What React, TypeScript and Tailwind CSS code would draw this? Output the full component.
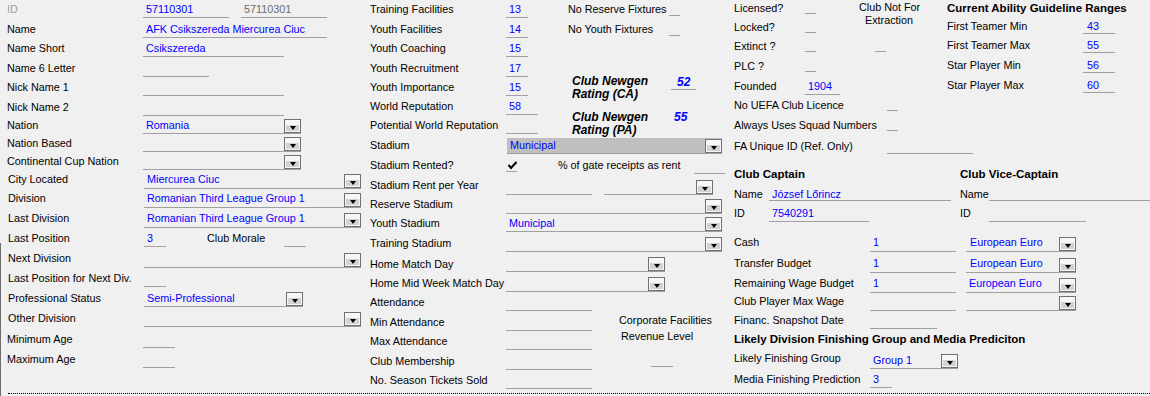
import React from "react";

type Kids = { children?: React.ReactNode };

function DropBtn() {
  return (
    <div className="w-[17px] h-[14px] shrink-0 self-end border border-[#707070] bg-[#f7f7f7] flex flex-col justify-end p-[1px]">
      <div className="h-[6px] bg-[#d2d2d2] flex items-center justify-center">
        <div className="w-[1px] h-0 border-x-[3px] border-x-transparent border-t-[4px] border-t-black" />
      </div>
    </div>
  );
}

function Field({
  w,
  h = "h-[16px]",
  v,
  drop,
  bg = "",
  color = "text-[#0000ff]",
  pl = "pl-[3px]",
  className = "",
}: {
  w: string;
  h?: string;
  v?: React.ReactNode;
  drop?: boolean;
  bg?: string;
  color?: string;
  pl?: string;
  className?: string;
}) {
  return (
    <div className={`${w} ${h} ${bg} ${className} shrink-0 flex items-start border-b border-[#a0a0a0]`}>
      <span className={`flex-1 min-w-0 ${pl} ${color} whitespace-nowrap leading-[14px] overflow-hidden`}>{v}</span>
      {drop && <DropBtn />}
    </div>
  );
}

function Check({ h = "h-[13px]", className = "", children }: { h?: string; className?: string } & Kids) {
  return <div className={`w-[11px] ${h} ${className} shrink-0 border-b border-[#a0a0a0]`}>{children}</div>;
}

function Row({ h, className = "", children }: { h: string; className?: string } & Kids) {
  return <div className={`flex items-start shrink-0 ${h} ${className}`}>{children}</div>;
}

function L({ w, className = "", children }: { w: string; className?: string } & Kids) {
  return <span className={`${w} ${className} shrink-0 whitespace-nowrap leading-[14px]`}>{children}</span>;
}

function Tick() {
  return (
    <svg width="11" height="9" viewBox="0 0 11 9" className="ml-[1px] mt-[3px]">
      <polyline points="1.5,4 4,7 9.5,1" fill="none" stroke="black" strokeWidth="2" />
    </svg>
  );
}

export default function App() {
  return (
    <div className="w-[1150px] h-[396px] bg-[#f0f0f0] text-black text-[10.8px] font-['Liberation_Sans',Arial,sans-serif] overflow-hidden relative flex flex-col">
      <div className="absolute left-0 top-[243px] bottom-0 w-px bg-[#6d6d6d]" />

      <div className="flex h-[393px] shrink-0">
        {/* general */}
        <div className="w-[370px] shrink-0 pl-[7px] pt-[2px] flex flex-col">
          <Row h="h-[20px]">
            <L w="w-[136px]" className="text-[#a0a0a0]">ID</L>
            <Field w="w-[86px]" v="57110301" />
            <Field w="w-[86px]" v="57110301" color="text-[#6d6d6d]" className="ml-[12px]" />
          </Row>
          <Row h="h-[19px]">
            <L w="w-[136px]">Name</L>
            <Field w="w-[184px]" v="AFK Csikszereda Miercurea Ciuc" />
          </Row>
          <Row h="h-[20px]">
            <L w="w-[136px]">Name Short</L>
            <Field w="w-[141px]" v="Csikszereda" />
          </Row>
          <Row h="h-[19px]">
            <L w="w-[136px]">Name 6 Letter</L>
            <Field w="w-[66px]" />
          </Row>
          <Row h="h-[20px]">
            <L w="w-[136px]">Nick Name 1</L>
            <Field w="w-[141px]" />
          </Row>
          <Row h="h-[18px]">
            <L w="w-[136px]">Nick Name 2</L>
            <Field w="w-[141px]" />
          </Row>
          <Row h="h-[18px]">
            <L w="w-[136px]">Nation</L>
            <Field w="w-[158px]" v="Romania" drop />
          </Row>
          <Row h="h-[18px]">
            <L w="w-[136px]">Nation Based</L>
            <Field w="w-[158px]" drop />
          </Row>
          <Row h="h-[18px]">
            <L w="w-[136px]">Continental Cup Nation</L>
            <Field w="w-[158px]" drop />
          </Row>
          <Row h="h-[19px]">
            <L w="w-[136px]" className="pl-[1px]">City Located</L>
            <Field w="w-[217px]" h="h-[17px]" v="Miercurea Ciuc" drop className="ml-[1px]" />
          </Row>
          <Row h="h-[20px]">
            <L w="w-[136px]" className="pl-[1px]">Division</L>
            <Field w="w-[217px]" h="h-[17px]" v="Romanian Third League Group 1" drop className="ml-[1px]" />
          </Row>
          <Row h="h-[20px]">
            <L w="w-[136px]" className="pl-[1px]">Last Division</L>
            <Field w="w-[217px]" h="h-[17px]" v="Romanian Third League Group 1" drop className="ml-[1px]" />
          </Row>
          <Row h="h-[20px]">
            <L w="w-[136px]" className="pl-[1px]">Last Position</L>
            <Field w="w-[22px]" v="3" className="ml-[1px]" />
            <L w="w-[77px]" className="ml-[41px]">Club Morale</L>
            <Field w="w-[22px]" />
          </Row>
          <Row h="h-[20px]">
            <L w="w-[136px]" className="pl-[1px]">Next Division</L>
            <Field w="w-[217px]" h="h-[17px]" drop className="ml-[1px]" />
          </Row>
          <Row h="h-[20px]">
            <L w="w-[136px]" className="pl-[1px]">Last Position for Next Div.</L>
            <Field w="w-[22px]" className="ml-[1px]" />
          </Row>
          <Row h="h-[20px]">
            <L w="w-[136px]" className="pl-[1px]">Professional Status</L>
            <Field w="w-[159px]" v="Semi-Professional" drop className="ml-[1px]" />
          </Row>
          <Row h="h-[21px]">
            <L w="w-[136px]" className="pl-[1px]">Other Division</L>
            <Field w="w-[217px]" drop className="ml-[1px]" />
          </Row>
          <Row h="h-[20px]">
            <L w="w-[136px]">Minimum Age</L>
            <Field w="w-[32px]" />
          </Row>
          <Row h="h-[20px]">
            <L w="w-[136px]">Maximum Age</L>
            <Field w="w-[32px]" />
          </Row>
        </div>

        {/* facilities / stadium */}
        <div className="w-[364px] shrink-0 pt-[2px] flex flex-col">
          <div className="flex h-[136px] shrink-0">
            <div className="w-[198px] shrink-0 flex flex-col">
              <Row h="h-[20px]">
                <L w="w-[136px]">Training Facilities</L>
                <Field w="w-[22px]" v="13" />
              </Row>
              <Row h="h-[19px]">
                <L w="w-[136px]">Youth Facilities</L>
                <Field w="w-[22px]" v="14" />
              </Row>
              <Row h="h-[20px]">
                <L w="w-[136px]">Youth Coaching</L>
                <Field w="w-[22px]" v="15" />
              </Row>
              <Row h="h-[19px]">
                <L w="w-[136px]">Youth Recruitment</L>
                <Field w="w-[22px]" v="17" />
              </Row>
              <Row h="h-[19px]">
                <L w="w-[136px]">Youth Importance</L>
                <Field w="w-[22px]" v="15" />
              </Row>
              <Row h="h-[19px]">
                <L w="w-[136px]">World Reputation</L>
                <Field w="w-[32px]" v="58" />
              </Row>
              <Row h="h-[20px]">
                <L w="w-[136px]">Potential World Reputation</L>
                <Field w="w-[32px]" />
              </Row>
            </div>
            <div className="flex-1 flex flex-col">
              <Row h="h-[20px]">
                <L w="w-[101px]">No Reserve Fixtures</L>
                <Check h="h-[14px]" />
              </Row>
              <Row h="h-[20px]">
                <L w="w-[101px]">No Youth Fixtures</L>
                <Check h="h-[14px]" />
              </Row>
              <div className="flex mt-[33px]">
                <div className="w-[103px] pl-[4px] text-[12px] font-bold italic leading-[13px]">
                  Club Newgen
                  <br />
                  Rating (CA)
                </div>
                <Field w="w-[25px]" h="h-[15px]" pl="pl-[6px]" v={<span className="text-[12px] font-bold italic leading-[13px]">52</span>} />
              </div>
              <div className="flex mt-[10px]">
                <div className="w-[103px] pl-[4px] text-[12px] font-bold italic leading-[13px]">
                  Club Newgen
                  <br />
                  Rating (PA)
                </div>
                <span className="pl-[3px] text-[#0000ff] text-[12px] font-bold italic leading-[13px]">55</span>
              </div>
            </div>
          </div>

          <Row h="h-[20px]">
            <L w="w-[136px]">Stadium</L>
            <Field w="w-[215px]" v="Municipal" bg="bg-[#bfbfbf]" drop className="ml-[1px]" />
          </Row>
          <Row h="h-[20px]">
            <L w="w-[136px]">Stadium Rented?</L>
            <Check h="h-[14px]">
              <Tick />
            </Check>
            <L w="w-[136px]" className="ml-[41px]">% of gate receipts as rent</L>
            <Field w="w-[31px]" />
          </Row>
          <Row h="h-[19px]">
            <L w="w-[136px]">Stadium Rent per Year</L>
            <Field w="w-[86px]" h="h-[17px]" />
            <Field w="w-[109px]" h="h-[17px]" drop className="ml-[12px]" />
          </Row>
          <Row h="h-[19px]">
            <L w="w-[136px]">Reserve Stadium</L>
            <Field w="w-[216px]" h="h-[17px]" drop />
          </Row>
          <Row h="h-[20px]">
            <L w="w-[136px]">Youth Stadium</L>
            <Field w="w-[216px]" v="Municipal" drop />
          </Row>
          <Row h="h-[21px]">
            <L w="w-[136px]">Training Stadium</L>
            <Field w="w-[216px]" drop />
          </Row>
          <Row h="h-[19px]">
            <L w="w-[136px]">Home Match Day</L>
            <Field w="w-[159px]" h="h-[15px]" drop />
          </Row>
          <Row h="h-[19px]">
            <L w="w-[136px]">Home Mid Week Match Day</L>
            <Field w="w-[159px]" drop />
          </Row>
          <div className="flex">
            <div className="w-[249px] shrink-0 flex flex-col">
              <Row h="h-[20px]">
                <L w="w-[136px]">Attendance</L>
                <Field w="w-[86px]" />
              </Row>
              <Row h="h-[19px]">
                <L w="w-[136px]">Min Attendance</L>
                <Field w="w-[86px]" />
              </Row>
              <Row h="h-[20px]">
                <L w="w-[136px]">Max Attendance</L>
                <Field w="w-[86px]" />
              </Row>
              <Row h="h-[19px]">
                <L w="w-[136px]">Club Membership</L>
                <Field w="w-[86px]" />
              </Row>
              <Row h="h-[20px]">
                <L w="w-[136px]">No. Season Tickets Sold</L>
                <Field w="w-[86px]" />
              </Row>
            </div>
            <div className="flex flex-col pt-[17px]">
              <span className="leading-[16px] whitespace-nowrap">Corporate Facilities</span>
              <span className="leading-[16px] pl-[2px] whitespace-nowrap">Revenue Level</span>
              <Field w="w-[22px]" className="ml-[32px] mt-[7px]" />
            </div>
          </div>
        </div>

        {/* club / finances */}
        <div className="flex-1 pt-[1px] flex flex-col">
          <div className="flex h-[166px] shrink-0">
            <div className="w-[213px] shrink-0 flex flex-col">
              <div className="flex h-[78px] shrink-0">
                <div className="w-[125px] shrink-0 flex flex-col">
                  <Row h="h-[19px]">
                    <L w="w-[71px]">Licensed?</L>
                    <Check />
                  </Row>
                  <Row h="h-[19px]">
                    <L w="w-[71px]">Locked?</L>
                    <Check />
                  </Row>
                  <Row h="h-[20px]">
                    <L w="w-[71px]">Extinct ?</L>
                    <Check />
                  </Row>
                  <Row h="h-[20px]">
                    <L w="w-[71px]">PLC ?</L>
                    <Check />
                  </Row>
                </div>
                <div className="w-[60px] shrink-0 flex flex-col">
                  <div className="text-center leading-[13px] whitespace-nowrap">
                    Club Not For
                    <br />
                    Extraction
                  </div>
                  <Check className="mt-[12px] ml-[16px]" />
                </div>
              </div>
              <Row h="h-[19px]">
                <L w="w-[71px]">Founded</L>
                <Field w="w-[35px]" v="1904" />
              </Row>
              <Row h="h-[20px]">
                <L w="w-[153px]">No UEFA Club Licence</L>
                <Check />
              </Row>
              <Row h="h-[21px]">
                <L w="w-[153px]">Always Uses Squad Numbers</L>
                <Check />
              </Row>
              <Row h="h-[28px]">
                <L w="w-[153px]">FA Unique ID (Ref. Only)</L>
                <Field w="w-[86px]" h="h-[15px]" />
              </Row>
            </div>
            <div className="flex-1 flex flex-col">
              <Row h="h-[18px]">
                <L w="w-[200px]" className="font-bold text-[11.5px]">Current Ability Guideline Ranges</L>
              </Row>
              <Row h="h-[19px]">
                <L w="w-[136px]">First Teamer Min</L>
                <Field w="w-[32px]" h="h-[15px]" pl="pl-[4px]" v="43" />
              </Row>
              <Row h="h-[20px]">
                <L w="w-[136px]">First Teamer Max</L>
                <Field w="w-[32px]" h="h-[15px]" pl="pl-[4px]" v="55" />
              </Row>
              <Row h="h-[20px]">
                <L w="w-[136px]">Star Player Min</L>
                <Field w="w-[32px]" h="h-[15px]" pl="pl-[4px]" v="56" />
              </Row>
              <Row h="h-[20px]">
                <L w="w-[136px]">Star Player Max</L>
                <Field w="w-[32px]" h="h-[15px]" pl="pl-[4px]" v="60" />
              </Row>
            </div>
          </div>

          <Row h="h-[20px]">
            <L w="w-[226px]" className="font-bold text-[11.5px]">Club Captain</L>
            <L w="w-[160px]" className="font-bold text-[11.5px]">Club Vice-Captain</L>
          </Row>
          <Row h="h-[19px]">
            <L w="w-[35px]">Name</L>
            <Field w="w-[182px]" h="h-[14px]" v="József Lőrincz" />
            <L w="w-[29px]" className="ml-[9px]">Name</L>
            <Field w="w-[161px]" h="h-[14px]" />
          </Row>
          <Row h="h-[29px]">
            <L w="w-[35px]">ID</L>
            <Field w="w-[100px]" v="7540291" />
            <L w="w-[29px]" className="ml-[91px]">ID</L>
            <Field w="w-[97px]" />
          </Row>

          <Row h="h-[21px]">
            <L w="w-[136px]">Cash</L>
            <Field w="w-[86px]" h="h-[17px]" v="1" />
            <Field w="w-[110px]" h="h-[17px]" v="European Euro" pl="pl-[4px]" drop className="ml-[10px]" />
          </Row>
          <Row h="h-[20px]">
            <L w="w-[136px]">Transfer Budget</L>
            <Field w="w-[86px]" h="h-[17px]" v="1" />
            <Field w="w-[110px]" h="h-[17px]" v="European Euro" pl="pl-[4px]" drop className="ml-[10px]" />
          </Row>
          <Row h="h-[18px]">
            <L w="w-[136px]">Remaining Wage Budget</L>
            <Field w="w-[86px]" h="h-[17px]" v="1" />
            <Field w="w-[110px]" h="h-[17px]" v="European Euro" drop className="ml-[10px]" />
          </Row>
          <Row h="h-[19px]">
            <L w="w-[136px]">Club Player Max Wage</L>
            <Field w="w-[86px]" h="h-[17px]" />
            <Field w="w-[110px]" h="h-[17px]" drop className="ml-[10px]" />
          </Row>
          <Row h="h-[19px]">
            <L w="w-[136px]">Financ. Snapshot Date</L>
            <Field w="w-[67px]" />
          </Row>
          <Row h="h-[19px]">
            <L w="w-[320px]" className="font-bold text-[11.5px]">Likely Division Finishing Group and Media Prediciton</L>
          </Row>
          <Row h="h-[21px]">
            <L w="w-[136px]">Likely Finishing Group</L>
            <Field w="w-[88px]" h="h-[18px]" pl="pl-[3px] pt-[2px]" v="Group 1" drop />
          </Row>
          <Row h="h-[20px]">
            <L w="w-[136px]">Media Finishing Prediction</L>
            <Field w="w-[22px]" v="3" />
          </Row>
        </div>
      </div>

      <div className="ml-[8px] border-t border-dotted border-black" />
    </div>
  );
}
